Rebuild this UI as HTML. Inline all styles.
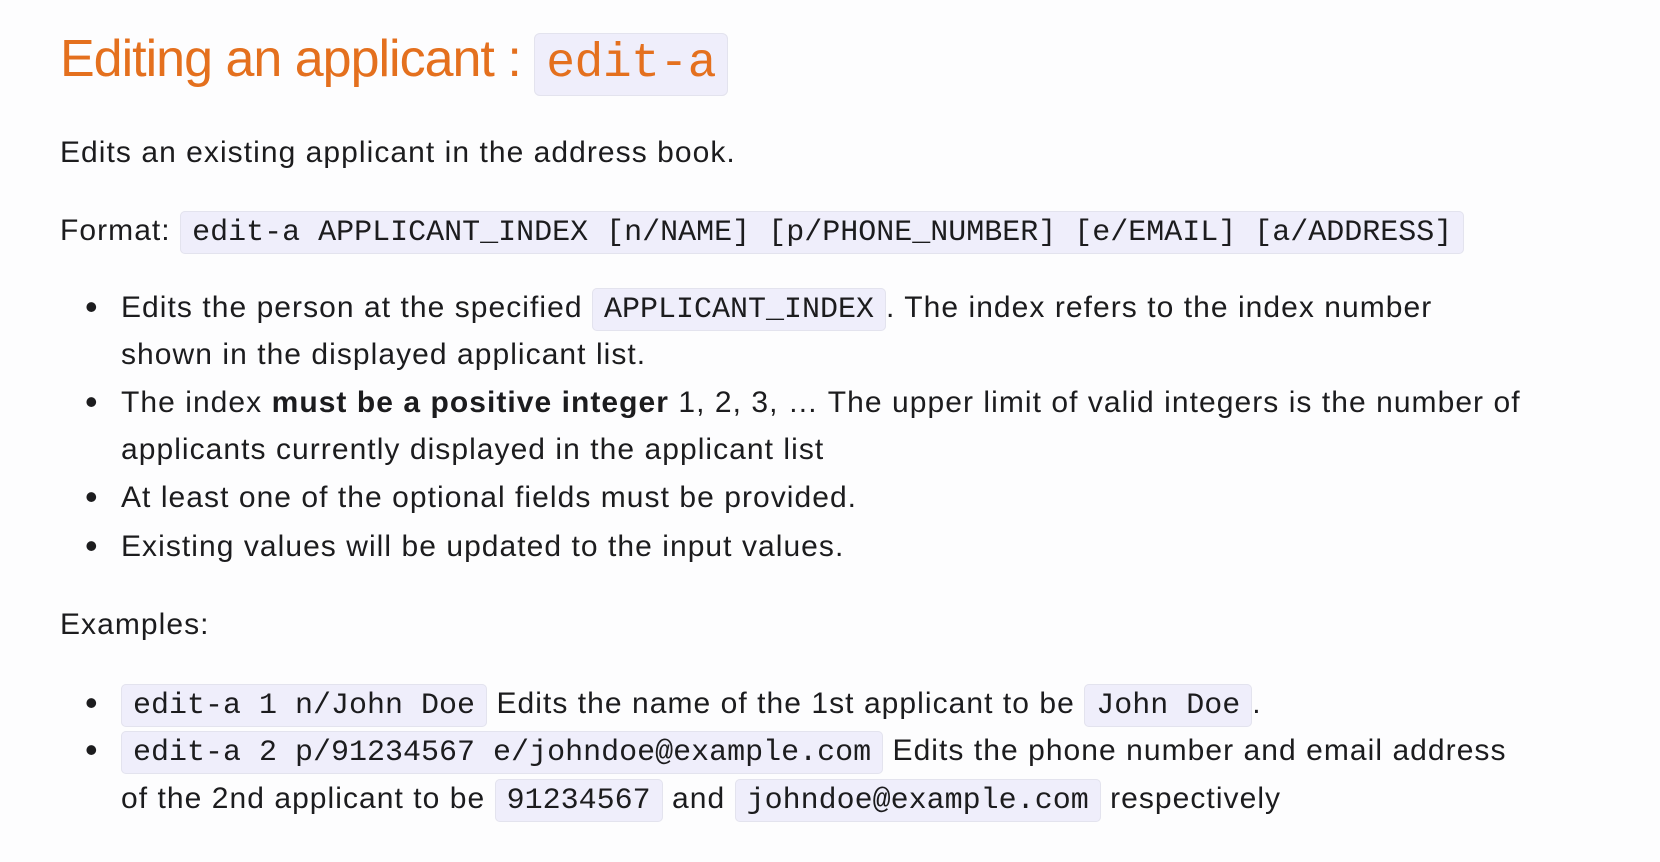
<!DOCTYPE html>
<html><head><meta charset="utf-8"><style>
html,body{margin:0;padding:0;background:#fdfdfe;width:1660px;height:862px;overflow:hidden}
body{font-family:"Liberation Sans",Arial,sans-serif;color:#1c1c1e;position:relative}
.l{position:absolute;left:60px;font-size:30px;letter-spacing:1.05px;line-height:48px;white-space:nowrap}
.b{left:121px}
.b .d{position:absolute;left:-36px;top:-1px;font-size:36px}
code{font-family:"Liberation Mono","DejaVu Sans Mono",monospace;font-size:30px;letter-spacing:0;line-height:1;background:#efeefb;border:1px solid #e3e3ee;border-radius:5px;padding:4px 11px 3px;color:#1c1c1e}
h1{position:absolute;left:60px;top:24px;margin:0;font-weight:normal;font-size:52px;letter-spacing:-1px;line-height:70px;color:#e4701e;white-space:nowrap}
h1 code{font-size:48px;color:#e4701e;padding:3px 11px 4px;border-radius:6px;letter-spacing:-0.5px}
</style></head><body>
<h1>Editing an applicant : <code>edit-a</code></h1>
<div class="l" style="top:129px">Edits an existing applicant in the address book.</div>
<div class="l" style="top:207px">Format: <code>edit-a APPLICANT_INDEX [n/NAME] [p/PHONE_NUMBER] [e/EMAIL] [a/ADDRESS]</code></div>
<div class="l b" style="top:284px"><span class="d">•</span>Edits the person at the specified <code>APPLICANT_INDEX</code>. The index refers to the index number</div>
<div class="l b" style="top:331px">shown in the displayed applicant list.</div>
<div class="l b" style="top:379px"><span class="d">•</span>The index <b>must be a positive integer</b> 1, 2, 3, … The upper limit of valid integers is the number of</div>
<div class="l b" style="top:426px">applicants currently displayed in the applicant list</div>
<div class="l b" style="top:474px"><span class="d">•</span>At least one of the optional fields must be provided.</div>
<div class="l b" style="top:523px"><span class="d">•</span>Existing values will be updated to the input values.</div>
<div class="l" style="top:601px">Examples:</div>
<div class="l b" style="top:680px"><span class="d">•</span><code>edit-a 1 n/John Doe</code> Edits the name of the 1st applicant to be <code>John Doe</code>.</div>
<div class="l b" style="top:727px"><span class="d">•</span><code>edit-a 2 p/91234567 e/johndoe@example.com</code> Edits the phone number and email address</div>
<div class="l b" style="top:775px">of the 2nd applicant to be <code>91234567</code> and <code>johndoe@example.com</code> respectively</div>
</body></html>
